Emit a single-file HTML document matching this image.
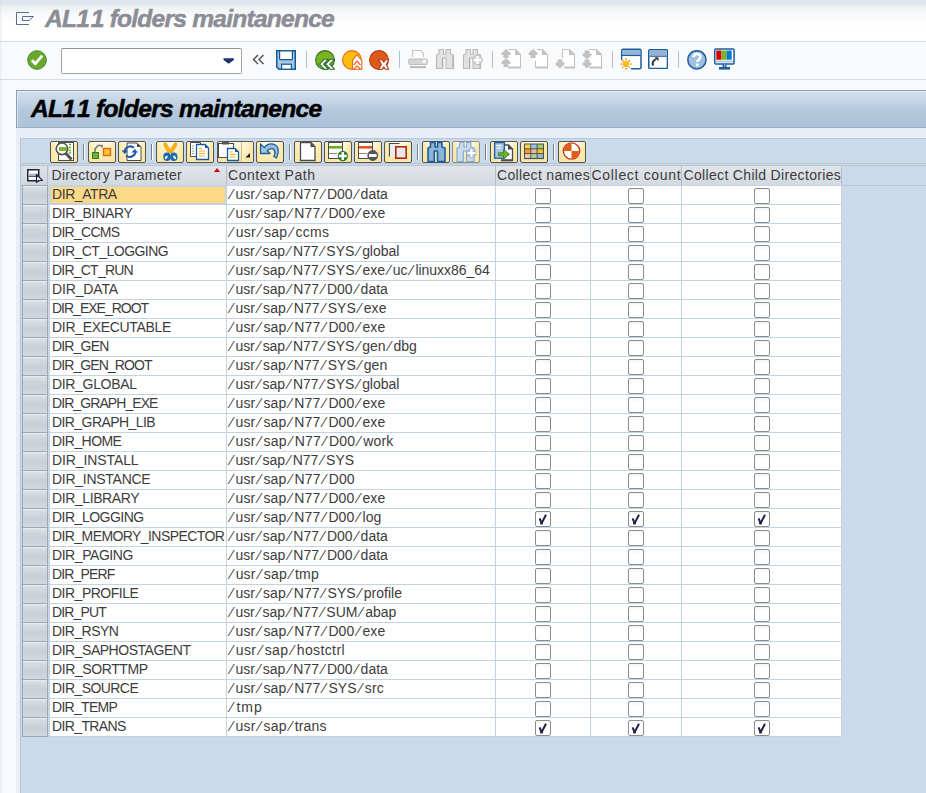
<!DOCTYPE html>
<html><head><meta charset="utf-8">
<style>
*{box-sizing:border-box;margin:0;padding:0}
html,body{width:926px;height:793px;overflow:hidden;background:#f6f7f9;font-family:"Liberation Sans",sans-serif}
.abs{position:absolute}
#titlebar{position:absolute;left:0;top:0;width:926px;height:41px;background:linear-gradient(#dde4ed 0px,#e1e7ef 3.5px,#eff2f6 8px,#f9fafc 15px,#fefefe 24px,#ffffff 41px)}
#title{position:absolute;left:45px;top:6px;-webkit-text-stroke:0.45px #8a8d95;font:bold italic 23px "Liberation Sans",sans-serif;color:#8a8d95;white-space:pre;letter-spacing:-0.74px;transform:scaleX(1.07);transform-origin:0 0}
#line1{position:absolute;left:0;top:41px;width:926px;height:1px;background:#d4dae2}
#toolbar{position:absolute;left:0;top:42px;width:926px;height:37px;background:#f9fafc}
#line2{position:absolute;left:0;top:79px;width:926px;height:1px;background:#d6dce4}
#leftstrip{position:absolute;left:0;top:80px;width:16px;height:713px;background:#f9fafb}
#leftedge{position:absolute;left:0;top:0;width:3px;height:793px;background:linear-gradient(90deg,rgba(205,212,222,.35),rgba(255,255,255,0))}
#topgap{position:absolute;left:16px;top:80px;width:910px;height:10px;background:#f6f8fa}
#hbox{position:absolute;left:16px;top:90px;width:910px;height:38px;border-top:1px solid #8c9db3;border-left:1px solid #8c9db3;border-bottom:1px solid #9cb0c6;box-shadow:inset 1px 1px 0 rgba(255,255,255,.45);background:linear-gradient(#d4e1ed 0px,#c4d5e5 10px,#b3c8dc 20px,#adc3d9 36px)}
#htitle{position:absolute;left:14px;top:5px;-webkit-text-stroke:0.45px #000;font:bold italic 23px "Liberation Sans",sans-serif;color:#000;white-space:pre;letter-spacing:-0.68px;transform:scaleX(1.07);transform-origin:0 0}
#below{position:absolute;left:16px;top:128px;width:910px;height:665px;background:#e8eef5}
#panel{position:absolute;left:20px;top:138px;width:906px;height:655px;background:#cadaea;border-top:1px solid #b7c5d4;border-left:1px solid #b7c5d4}
.btn{position:absolute;top:141px;height:22px;width:28px;border:1px solid #555;border-radius:2px;background:linear-gradient(90deg,rgba(248,228,150,.7),rgba(255,255,255,0) 25%,rgba(255,255,255,0) 75%,rgba(248,228,150,.7)),linear-gradient(#fffbe6,#fdf1c4 40%,#f9e8ab)}
.btn svg{position:absolute;left:-1px;top:-1px;overflow:visible}
.btn.dis{border-color:#8f8f8f}
.bsep{position:absolute;top:144px;height:16px;width:1px;background:#6f7f90;box-shadow:1px 0 0 #fff}
.tsep{position:absolute;top:51px;height:17px;width:1px;background:#a9c1dc}
#tl1{position:absolute;left:21px;top:163px;width:905px;height:1px;background:#bac6d2}
#tl2{position:absolute;left:21px;top:165px;width:905px;height:1px;background:#b9c5d1}
#tl3{position:absolute;left:21px;top:185px;width:905px;height:1px;background:#bcc7d2}
.hc{position:absolute;top:166px;height:19px;background:linear-gradient(#e1e5ea,#d3d9e0);border-right:1px solid #b3bfcb;white-space:pre}
.hc .t{z-index:3;position:absolute;left:0.5px;top:1px}
.t{font-size:14px;color:#3c3c3c;white-space:pre;line-height:17px}
#hsel{position:absolute;left:22px;top:166px;width:26px;height:19px;background:linear-gradient(#dfe3e8,#d0d6dd);border-right:1px solid #b3bfcb}
.sel{position:absolute;left:22px;width:26px;height:20px;border:1px solid #9ba8b6;background:linear-gradient(#edf0f3 0px,#d7dce2 2px,#c9cfd7 10px,#d4d9df 19px)}
#tablebg{position:absolute;left:48px;top:185px;width:794px;height:552px;background:#c5d2df;border-left:1px solid #c8d8e8}
.cell{position:absolute;height:18px;background:#fff}
.cell .t{z-index:3;position:absolute;left:2px;top:0px}
.c2 .t{left:0.5px}
.sl{font-style:normal;margin:0 2.6px 0 3px}
.c1{left:50px;width:176px}
.c2{left:227px;width:268px}
.c3{left:496px;width:94px}
.c4{left:591px;width:90px}
.c5{left:682px;width:159px}
.hl{background:#fcd987;border:1px solid #c5d2df}
.hl .t{left:1px;top:-1px}
.cb{position:absolute;width:16px;height:16px;border:1px solid #8c8c8c;border-radius:2px;background:linear-gradient(#f4f4f4,#fff 4px,#fff)}
.cb svg{position:absolute;left:-1px;top:-1px}
#sortarrow{position:absolute;left:214px;top:168px;width:0;height:0;border-left:3.5px solid transparent;border-right:3.5px solid transparent;border-bottom:4px solid #d0021b}
</style></head><body>
<div id="titlebar">
  <svg class="abs" style="left:16px;top:11px" width="19" height="15" viewBox="0 0 19 15"><path d="M13 1.5H0.5V13.5H13M13 5.5H6.5V9.5H13L17.5 5.5H13" fill="none" stroke="#5d6e8c" stroke-width="1"/></svg>
  <div id="title">AL1<span style="margin-left:1.5px">1</span> folders maintanence</div>
</div>
<div id="line1"></div>
<div id="toolbar">
  <!-- green check -->
  <svg class="abs" style="left:27px;top:8px" width="20" height="20" viewBox="0 0 20 20"><circle cx="10" cy="10" r="9.3" fill="#69a82a" stroke="#3f8a2a" stroke-width="1"/><path d="M4.8 10.2L8.3 13.6L15.2 5.6" fill="none" stroke="#fff" stroke-width="2.8"/></svg>
  <!-- command field -->
  <div class="abs" style="left:61px;top:6px;width:181px;height:26px;border:1px solid #a3a3a3;border-top-color:#8e8e8e;border-radius:2px;background:#fff"></div>
  <svg class="abs" style="left:223px;top:15.5px" width="12" height="7" viewBox="0 0 12 7"><path d="M0.5 0.3H10.8V2L5.65 5.8L0.5 2Z" fill="#1e3170"/></svg>
  <svg class="abs" style="left:252px;top:12px" width="14" height="11" viewBox="0 0 14 11"><path d="M6 1L1.5 5.5L6 10M11.5 1L7 5.5L11.5 10" fill="none" stroke="#555" stroke-width="1.5"/></svg>
  <!-- save -->
  <svg class="abs" style="left:276px;top:8px" width="20" height="20" viewBox="0 0 20 20"><path d="M0.75 0.75H19.25V19.25H3L0.75 17Z" fill="#a9c5e2" stroke="#0f5a96" stroke-width="1.5"/><rect x="3.6" y="0.8" width="12.8" height="8.8" rx="0.8" fill="#fff" stroke="#0f5a96" stroke-width="1.2"/><rect x="5.6" y="14.2" width="9.8" height="5" fill="#fff" stroke="#0f5a96" stroke-width="1.2"/></svg>
  <div class="tsep" style="left:306px;top:9px"></div>
  <!-- back -->
  <svg class="abs" style="left:315px;top:8px" width="21" height="21" viewBox="0 0 21 21"><circle cx="10" cy="10" r="9.4" fill="#7ab51d" stroke="#2d6e2d" stroke-width="1.1"/><path d="M4.5 14.2L9.3 9.3H13.3L8.5 14.2L13.3 19.2H9.3Z M10.5 14.2L15.3 9.3H19.5L14.7 14.2L19.5 19.2H15.3Z" fill="#fff" stroke="#2d6e2d" stroke-width="1.1" stroke-linejoin="round"/></svg>
  <!-- exit -->
  <svg class="abs" style="left:342px;top:8px" width="21" height="21" viewBox="0 0 21 21"><circle cx="10" cy="10" r="9.4" fill="#fbbd12" stroke="#e8681a" stroke-width="1.1"/><path d="M10.5 19.3V10.5L14.8 4.8L19.8 10.5V19.3Z" fill="#fff" stroke="#e8681a" stroke-width="1.1" stroke-linejoin="round"/><path d="M11.8 15L15 11.2L18.5 15M11.8 19.2L15 15.8L18.5 19.2" fill="none" stroke="#e8681a" stroke-width="1.2"/></svg>
  <!-- cancel -->
  <svg class="abs" style="left:369px;top:8px" width="21" height="21" viewBox="0 0 21 21"><circle cx="10" cy="10" r="9.4" fill="#dc5a1a" stroke="#b83a10" stroke-width="1.1"/><path d="M9.8 9.8H13.3L14.8 12.2L16.3 9.8H19.8L17.3 14.5L19.8 19.3H16.3L14.8 16.8L13.3 19.3H9.8L12.3 14.5Z" fill="#fff" stroke="#b83a10" stroke-width="1.1" stroke-linejoin="round"/></svg>
  <div class="tsep" style="left:399px;top:9px"></div>
  <!-- print -->
  <svg class="abs" style="left:408px;top:7px" width="20" height="20" viewBox="0 0 20 20"><path d="M4.5 8V1.5H12.5L15.5 4.5V8" fill="#fff" stroke="#c4c4c4" stroke-width="1.2"/><rect x="0.8" y="10" width="18.4" height="5.5" rx="1" fill="#d6d6d6" stroke="#bdbdbd"/><rect x="15" y="11" width="3" height="3" fill="#fff"/><rect x="2" y="17" width="16" height="2.2" fill="#bdbdbd"/></svg>
  <!-- find -->
  <svg class="abs" style="left:435px;top:7px" width="21" height="21" viewBox="0 0 21 21"><path d="M1.5 19.5V6L4 5V0.5H8.5V5H11V0.5H15.5V5L18.5 6V19.5H11V9H7.8V19.5Z" fill="#e2e2e2" stroke="#b9b9b9" stroke-width="1.1" stroke-linejoin="round"/><path d="M18 6.5V19M7.5 9.5V19" stroke="#a9a9a9" stroke-width="1"/></svg>
  <svg class="abs" style="left:462px;top:7px" width="22" height="21" viewBox="0 0 22 21"><path d="M1.5 19.5V6L4 5V0.5H8.5V5H11V0.5H15.5V5L18.5 6V19.5H11V9H7.8V19.5Z" fill="#e2e2e2" stroke="#b9b9b9" stroke-width="1.1" stroke-linejoin="round"/><path d="M18 6.5V19M7.5 9.5V19" stroke="#a9a9a9" stroke-width="1"/><circle cx="15.5" cy="11" r="4.8" fill="#d8d8d8" stroke="#b9b9b9"/><path d="M11.5 11H19.5M15.5 7V15" stroke="#fff" stroke-width="2.2"/></svg>
  <div class="tsep" style="left:492px;top:9px"></div>
  <!-- page icons -->
  <svg class="abs" style="left:501px;top:7px" width="21" height="21" viewBox="0 0 21 21"><path d="M7.5 0.5H14.5L19.5 5.5V18.5H7.5" fill="#fff" stroke="#c2c2c2" stroke-width="1.1"/><path d="M14 0V6H20Z" fill="#c2c2c2"/><rect x="7.5" y="17.5" width="12.5" height="2" fill="#c2c2c2"/><path d="M5 0L0.5 4V6H9.5V4Z" fill="#c2c2c2"/><rect x="2.5" y="5.5" width="5" height="3.5" fill="#c2c2c2"/><path d="M5 9L0.5 13V15H9.5V13Z" fill="#c2c2c2"/><rect x="2.5" y="14.5" width="5" height="3.5" fill="#c2c2c2"/></svg>
  <svg class="abs" style="left:528px;top:7px" width="21" height="21" viewBox="0 0 21 21"><path d="M7.5 12V18.5H19.5V5.5L14.5 0.5H9" fill="#fff" stroke="#c2c2c2" stroke-width="1.1"/><path d="M14 0V6H20Z" fill="#c2c2c2"/><rect x="7.5" y="17.5" width="12.5" height="2" fill="#c2c2c2"/><path d="M5 0L0.5 4V6H9.5V4Z" fill="#c2c2c2"/><rect x="2.5" y="5.5" width="5" height="3.5" fill="#c2c2c2"/></svg>
  <svg class="abs" style="left:555px;top:7px" width="21" height="21" viewBox="0 0 21 21"><path d="M7.5 9V0.5H14.5L19.5 5.5V18.5H10" fill="#fff" stroke="#c2c2c2" stroke-width="1.1"/><path d="M14 0V6H20Z" fill="#c2c2c2"/><rect x="9" y="17.5" width="11" height="2" fill="#c2c2c2"/><path d="M5 19.5L0.5 15.5V13.5H9.5V15.5Z" fill="#c2c2c2"/><rect x="2.5" y="10.5" width="5" height="3.5" fill="#c2c2c2"/></svg>
  <svg class="abs" style="left:582px;top:7px" width="21" height="21" viewBox="0 0 21 21"><path d="M7.5 0.5H14.5L19.5 5.5V18.5H7.5" fill="#fff" stroke="#c2c2c2" stroke-width="1.1"/><path d="M14 0V6H20Z" fill="#c2c2c2"/><rect x="7.5" y="17.5" width="12.5" height="2" fill="#c2c2c2"/><path d="M5 10.5L0.5 6.5V4.5H9.5V6.5Z" fill="#c2c2c2"/><rect x="2.5" y="1.5" width="5" height="3.5" fill="#c2c2c2"/><path d="M5 19.5L0.5 15.5V13.5H9.5V15.5Z" fill="#c2c2c2"/><rect x="2.5" y="10.5" width="5" height="3.5" fill="#c2c2c2"/></svg>
  <div class="tsep" style="left:612px;top:9px"></div>
  <!-- new session -->
  <svg class="abs" style="left:618px;top:6px" width="26" height="24" viewBox="0 0 26 24"><path d="M3.75 12V2.5Q3.75 1.25 5 1.25H21.75Q23 1.25 23 2.5V19.5Q23 20.75 21.75 20.75H13" fill="#fff" stroke="#1a5e9a" stroke-width="1.5"/><rect x="4.5" y="2" width="17.8" height="5" fill="#93b4d8"/><path d="M4 7.5H22.8" stroke="#1a5e9a" stroke-width="1.2"/><rect x="4.5" y="8.2" width="8" height="5" fill="#fff"/><circle cx="8" cy="16" r="3.2" fill="#f9b90f"/><path d="M8 10.5V21.5M2.5 16H13.5M4.2 12.2L11.8 19.8M11.8 12.2L4.2 19.8" stroke="#f08a12" stroke-width="1.6" stroke-dasharray="1.6 1.6"/><circle cx="8" cy="16" r="3" fill="#fbbf14"/></svg>
  <!-- shortcut -->
  <svg class="abs" style="left:648px;top:7px" width="20" height="20" viewBox="0 0 20 20"><rect x="0.75" y="0.75" width="18.7" height="18.7" rx="1.3" fill="#fff" stroke="#1a5e9a" stroke-width="1.5"/><rect x="1.5" y="1.5" width="17.2" height="5" fill="#93b4d8"/><path d="M1.5 7.2H18.7" stroke="#1a5e9a" stroke-width="1.2"/><path d="M5.2 16.5Q3.8 13.5 6 11.5L8 10" fill="none" stroke="#3a3a3a" stroke-width="2"/><path d="M6.5 8.3H10.5V12.3Z" fill="#3a3a3a"/></svg>
  <div class="tsep" style="left:678px;top:9px"></div>
  <!-- help -->
  <svg class="abs" style="left:687px;top:8px" width="20" height="20" viewBox="0 0 20 20"><circle cx="9.9" cy="9.8" r="9.1" fill="#9dbfe0" stroke="#1a5e9a" stroke-width="1.5"/><path d="M6.6 7.2Q6.6 4 10 4Q13.4 4 13.4 7Q13.4 8.8 11.4 10Q10.3 10.7 10.3 12" fill="none" stroke="#fff" stroke-width="2.6"/><rect x="8.9" y="13.5" width="2.8" height="2.8" fill="#fff"/></svg>
  <!-- monitor -->
  <svg class="abs" style="left:714px;top:6px" width="21" height="22" viewBox="0 0 21 22"><rect x="0.75" y="0.9" width="19.3" height="15" rx="1" fill="#fff" stroke="#1a5e9a" stroke-width="1.5"/><rect x="2.3" y="2.5" width="5.2" height="9.2" fill="#d40000"/><rect x="7.5" y="2.5" width="5" height="9.2" fill="#7ab51d"/><rect x="12.5" y="2.5" width="5.2" height="9.2" fill="#0a7ac8"/><rect x="2" y="12.5" width="17" height="2" fill="#b5cbe2"/><rect x="8.5" y="16" width="4" height="3" fill="#1a5e9a"/><rect x="10" y="16.2" width="1.2" height="2.6" fill="#a9c4e0"/><rect x="5" y="19" width="11" height="2.6" fill="#1a5e9a"/></svg>
</div>
<div id="line2"></div>
<div id="leftstrip"></div>
<div id="topgap"></div>
<div id="hbox"><div id="htitle">AL1<span style="margin-left:1.5px">1</span> folders maintanence</div></div>
<div id="below"></div>
<div id="panel"></div>
<!-- table toolbar -->
<div class="btn" style="left:50px;width:28px"><svg width="28" height="22" viewBox="0 0 28 22"><rect x="8.5" y="1.5" width="15" height="18" fill="#fff" stroke="#4a4a4a"/>
<path d="M19 3.5h2M19 6.5h2M19 9.5h2M19 12h2" stroke="#6aad1e" stroke-width="1.6"/>
<circle cx="12" cy="7.8" r="5.8" fill="#fff" stroke="#555" stroke-width="1.6"/>
<rect x="9" y="6" width="8" height="4" fill="#7cb82e"/>
<path d="M15.5 12 L21.5 18.5" stroke="#555" stroke-width="3.2"/>
<path d="M8.5 19.5h8" stroke="#4a4a4a"/></svg></div>
<div class="btn" style="left:88px;width:28px"><svg width="28" height="22" viewBox="0 0 28 22"><path d="M7 11V8L10 4.5H14V6.5" fill="none" stroke="#777" stroke-width="1.6"/>
<rect x="4.5" y="11.5" width="6" height="6" fill="#6eb02a" stroke="#2f7a22"/>
<rect x="15.5" y="7.5" width="7" height="7" fill="#f9c42e" stroke="#e06a1a" stroke-width="1.4"/></svg></div>
<div class="btn" style="left:118px;width:28px"><svg width="28" height="22" viewBox="0 0 28 22"><path d="M9 2H19L23 6V19.5H9Z" fill="#fff" stroke="#4a4a4a"/><path d="M19 2V6H23Z" fill="#4a4a4a"/>
<path d="M6.5 10.5A5.8 5.8 0 0 1 16 6.8" fill="none" stroke="#1f5aa8" stroke-width="2"/>
<path d="M17.5 10.8A5.8 5.8 0 0 1 8 14.5" fill="none" stroke="#1f5aa8" stroke-width="2"/>
<path d="M3.5 9.5H10L6.8 13Z M13.5 11.5H20L16.8 8Z" fill="#1f5aa8"/></svg></div>
<div class="btn" style="left:156px;width:28px"><svg width="28" height="22" viewBox="0 0 28 22"><path d="M8 2H10L15 10.5L13.8 11.4H12.2L8 5Z M20.5 2H18.5L13.5 10.5L14.7 11.4H16.3L20.5 5Z" fill="#f8b615" stroke="#f08a0a" stroke-width="0.7"/>
<ellipse cx="11" cy="15.8" rx="3.7" ry="4.3" fill="#1a6aae"/><ellipse cx="10.2" cy="16.4" rx="1.1" ry="1.9" fill="#fff" transform="rotate(35 10.2 16.4)"/>
<ellipse cx="17.8" cy="15.8" rx="3.7" ry="4.3" fill="#1a6aae"/><ellipse cx="18.6" cy="16.4" rx="1.1" ry="1.9" fill="#fff" transform="rotate(-35 18.6 16.4)"/></svg></div>
<div class="btn" style="left:186px;width:28px"><svg width="28" height="22" viewBox="0 0 28 22"><path d="M4.5 1.5H14.5V15.5H4.5Z" fill="#fff" stroke="#4a4a4a"/>
<path d="M6 5h2M6 7.5h2M6 10h2M6 12.5h2" stroke="#999"/>
<path d="M10.5 3.5H19L22.5 7V18.5H10.5Z" fill="#fff" stroke="#1a5a99" stroke-width="1.3"/><path d="M19 3.5V7H22.5Z" fill="#1a5a99"/>
<path d="M13 7.5h3M13 10h6M13 12.5h6M13 15h6" stroke="#f0b020" stroke-width="1.2"/></svg></div>
<div class="btn" style="left:217px;width:37px"><svg width="37" height="22" viewBox="0 0 37 22"><rect x="1.5" y="2.5" width="15" height="14" fill="#fff" stroke="#4a4a4a"/>
<rect x="5" y="0.5" width="7" height="3" fill="#555"/>
<path d="M10.5 7.5H18L21.5 11V19.5H10.5Z" fill="#fff" stroke="#1a5a99" stroke-width="1.3"/><path d="M18 7.5V11H21.5Z" fill="#1a5a99"/>
<path d="M12.5 11h3M12.5 13.5h6M12.5 16h6" stroke="#f0b020" stroke-width="1.2"/>
<path d="M24.5 1V21" stroke="#c9bb86"/><path d="M25.5 1V21" stroke="#fff6d6"/>
<path d="M33 12V16.5H28.5Z" fill="#1a1a2a"/></svg></div>
<div class="btn" style="left:256px;width:28px"><svg width="28" height="22" viewBox="0 0 28 22"><path d="M4.5 3V12.5H14L11.3 9.8Q14 6.8 17 7.8Q19.5 9.5 18.8 13.2L17.8 15.5L20.5 17Q23 12 22 7.2Q20 2.8 15 2.8Q11 2.8 8.3 6.6Z" fill="#9ec0e0" stroke="#1a5e9a" stroke-width="1.3" stroke-linejoin="round"/></svg></div>
<div class="btn" style="left:294px;width:28px"><svg width="28" height="22" viewBox="0 0 28 22"><path d="M6.5 1.5H17L21 5.5V19.5H6.5Z" fill="#fff" stroke="#4a4a4a" stroke-width="1.3"/><path d="M16.5 1.5V6H21Z" fill="#4a4a4a"/></svg></div>
<div class="btn" style="left:324px;width:28px"><svg width="28" height="22" viewBox="0 0 28 22"><rect x="4.5" y="1.5" width="14" height="16" fill="#fff" stroke="#4a4a4a"/>
<rect x="5" y="5" width="13" height="2.6" fill="#6aad1e"/><path d="M5 12.5H13" stroke="#888"/>
<circle cx="18.8" cy="15" r="5.2" fill="#2f7f32"/>
<path d="M14.8 15H22.8M18.8 11V19" stroke="#fff" stroke-width="2.4"/></svg></div>
<div class="btn" style="left:354px;width:28px"><svg width="28" height="22" viewBox="0 0 28 22"><rect x="4.5" y="1.5" width="14" height="16" fill="#fff" stroke="#4a4a4a"/>
<rect x="5" y="5" width="13" height="2.6" fill="#e35a12"/><path d="M5 12.5H13" stroke="#888"/>
<circle cx="18.8" cy="14.5" r="5" fill="#555" stroke="#555"/>
<rect x="15" y="13" width="7.6" height="3" fill="#fff"/></svg></div>
<div class="btn" style="left:384px;width:28px"><svg width="28" height="22" viewBox="0 0 28 22"><path d="M5.5 15.5V2.5H15.5" fill="none" stroke="#4a4a4a" stroke-width="1.2"/><rect x="6" y="3" width="6" height="12" fill="#eee"/>
<rect x="11.8" y="5.8" width="10.4" height="11.4" fill="#e8e8e8" stroke="#b2260f" stroke-width="1.6"/></svg></div>
<div class="btn" style="left:422px;width:28px"><svg width="28" height="22" viewBox="0 0 28 22"><g transform="translate(4.5 1)"><path d="M1.5 19.5V6L4 5V0.5H8.5V5H11V0.5H15.5V5L18.5 6V19.5H11V9H7.8V19.5Z" fill="#8db4d8" stroke="#1a5e9a" stroke-width="1.6" stroke-linejoin="round"/></g></svg></div>
<div class="btn dis" style="left:452px;width:28px"><svg width="28" height="22" viewBox="0 0 28 22"><g transform="translate(3.5 1)"><path d="M1.5 19.5V6L4 5V0.5H8.5V5H11V0.5H15.5V5L18.5 6V19.5H11V9H7.8V19.5Z" fill="#c9dbec" stroke="#86acd0" stroke-width="1.2" stroke-linejoin="round"/></g>
<circle cx="19.5" cy="12" r="5" fill="#a9b8d6"/><path d="M15.5 12H23.5M19.5 8V16" stroke="#fff" stroke-width="2.2"/></svg></div>
<div class="btn" style="left:490px;width:28px"><svg width="28" height="22" viewBox="0 0 28 22"><path d="M12 4H18.5L22.5 8V19.5H11.5" fill="#fff" stroke="#4a4a4a" stroke-width="1.3"/><path d="M11 19.2H22.8" stroke="#4a4a4a" stroke-width="1.8"/><path d="M18 3.5V8.5H23Z" fill="#4a4a4a"/>
<rect x="4.6" y="1.6" width="9.8" height="15.6" fill="#a9c6e3" stroke="#1a5e9a" stroke-width="1.3"/>
<path d="M6.5 4.5h5M6.5 7h5" stroke="#fff" stroke-width="1.2"/>
<path d="M8.5 11.8H13.5V8.5L19.5 13.2L13.5 18V14.8H8.5Z" fill="#72b324" stroke="#2f7f32" stroke-width="0.9" stroke-linejoin="round"/></svg></div>
<div class="btn" style="left:520px;width:28px"><svg width="28" height="22" viewBox="0 0 28 22"><rect x="4" y="2.5" width="20" height="15.6" fill="#4f4f4f"/><rect x="5.0" y="3.5" width="5.3" height="3.8" fill="#fbd35a"/><rect x="11.3" y="3.5" width="5.3" height="3.8" fill="#9cc3e8"/><rect x="17.6" y="3.5" width="5.3" height="3.8" fill="#9fd06a"/><rect x="5.0" y="8.3" width="5.3" height="3.8" fill="#f5a11f"/><rect x="11.3" y="8.3" width="5.3" height="3.8" fill="#e5b8a8"/><rect x="17.6" y="8.3" width="5.3" height="3.8" fill="#fbc51b"/><rect x="5.0" y="13.1" width="5.3" height="3.8" fill="#f7c7cb"/><rect x="11.3" y="13.1" width="5.3" height="3.8" fill="#a8d79a"/><rect x="17.6" y="13.1" width="5.3" height="3.8" fill="#92bde4"/></svg></div>
<div class="btn" style="left:558px;width:28px"><svg width="28" height="22" viewBox="0 0 28 22"><circle cx="13.5" cy="10" r="8.2" fill="#fff" stroke="#c8321a" stroke-width="1.3"/>
<path d="M13.5 10V2.5A7.5 7.5 0 0 0 6 10Z M13.5 10V17.5A7.5 7.5 0 0 0 21 10Z" fill="#e05a14"/></svg></div>
<div class="bsep" style="left:83px"></div>
<div class="bsep" style="left:151px"></div>
<div class="bsep" style="left:289px"></div>
<div class="bsep" style="left:417px"></div>
<div class="bsep" style="left:485px"></div>
<div class="bsep" style="left:553px"></div>
<div id="tl1"></div><div id="tl2"></div>
<div id="hsel"><svg class="abs" style="left:4px;top:2px" width="18" height="15" viewBox="0 0 18 15"><rect x="1.75" y="1.75" width="11" height="11" fill="#fff" stroke="#22223c" stroke-width="1.5"/><rect x="2.5" y="5.5" width="9.5" height="2" fill="#b9b9b9"/><path d="M2.5 8.25H12.5" stroke="#22223c" stroke-width="1"/><path d="M10.5 6.5V14.5L12.5 12.5H16.5Z" fill="#fff" stroke="#22223c" stroke-width="1.2" stroke-linejoin="round"/></svg></div>
<div class="hc" style="left:49px;width:178px"><span class="t" style="left:2.5px;letter-spacing:0.27px;">Directory Parameter</span></div>
<div class="hc" style="left:227px;width:269px"><span class="t" style="left:1px;letter-spacing:0.55px;">Context Path</span></div>
<div class="hc" style="left:496px;width:95px"><span class="t" style="left:1px;letter-spacing:0.33px;">Collect names</span></div>
<div class="hc" style="left:591px;width:91px"><span class="t" style="left:0.6px;letter-spacing:0.67px;">Collect count</span></div>
<div class="hc" style="left:682px;width:160px"><span class="t" style="left:1.5px;letter-spacing:0.33px;">Collect Child Directories</span></div>
<div id="sortarrow"></div>
<div id="tl3"></div>
<div id="tablebg"></div>
<div class="sel" style="top:185px"></div>
<div class="cell c1 hl" style="top:186px"><span class="t" style="letter-spacing:-0.43px;">DIR_ATRA</span></div>
<div class="cell c2" style="top:186px"><span class="t" style="letter-spacing:0.00px;"><i class="sl">&#x2044;</i>usr<i class="sl">&#x2044;</i>sap<i class="sl">&#x2044;</i>N77<i class="sl">&#x2044;</i>D00<i class="sl">&#x2044;</i>data</span></div>
<div class="cell c3" style="top:186px"></div>
<div class="cell c4" style="top:186px"></div>
<div class="cell c5" style="top:186px"></div>
<div class="cb" style="left:535px;top:188px"></div>
<div class="cb" style="left:628px;top:188px"></div>
<div class="cb" style="left:754px;top:188px"></div>
<div class="sel" style="top:204px"></div>
<div class="cell c1" style="top:205px"><span class="t" style="letter-spacing:-0.33px;">DIR_BINARY</span></div>
<div class="cell c2" style="top:205px"><span class="t" style="letter-spacing:0.11px;"><i class="sl">&#x2044;</i>usr<i class="sl">&#x2044;</i>sap<i class="sl">&#x2044;</i>N77<i class="sl">&#x2044;</i>D00<i class="sl">&#x2044;</i>exe</span></div>
<div class="cell c3" style="top:205px"></div>
<div class="cell c4" style="top:205px"></div>
<div class="cell c5" style="top:205px"></div>
<div class="cb" style="left:535px;top:207px"></div>
<div class="cb" style="left:628px;top:207px"></div>
<div class="cb" style="left:754px;top:207px"></div>
<div class="sel" style="top:223px"></div>
<div class="cell c1" style="top:224px"><span class="t" style="letter-spacing:-0.71px;">DIR_CCMS</span></div>
<div class="cell c2" style="top:224px"><span class="t" style="letter-spacing:0.25px;"><i class="sl">&#x2044;</i>usr<i class="sl">&#x2044;</i>sap<i class="sl">&#x2044;</i>ccms</span></div>
<div class="cell c3" style="top:224px"></div>
<div class="cell c4" style="top:224px"></div>
<div class="cell c5" style="top:224px"></div>
<div class="cb" style="left:535px;top:226px"></div>
<div class="cb" style="left:628px;top:226px"></div>
<div class="cb" style="left:754px;top:226px"></div>
<div class="sel" style="top:242px"></div>
<div class="cell c1" style="top:243px"><span class="t" style="letter-spacing:-0.54px;">DIR_CT_LOGGING</span></div>
<div class="cell c2" style="top:243px"><span class="t" style="letter-spacing:-0.05px;"><i class="sl">&#x2044;</i>usr<i class="sl">&#x2044;</i>sap<i class="sl">&#x2044;</i>N77<i class="sl">&#x2044;</i>SYS<i class="sl">&#x2044;</i>global</span></div>
<div class="cell c3" style="top:243px"></div>
<div class="cell c4" style="top:243px"></div>
<div class="cell c5" style="top:243px"></div>
<div class="cb" style="left:535px;top:245px"></div>
<div class="cb" style="left:628px;top:245px"></div>
<div class="cb" style="left:754px;top:245px"></div>
<div class="sel" style="top:261px"></div>
<div class="cell c1" style="top:262px"><span class="t" style="letter-spacing:-0.78px;">DIR_CT_RUN</span></div>
<div class="cell c2" style="top:262px"><span class="t" style="letter-spacing:-0.03px;"><i class="sl">&#x2044;</i>usr<i class="sl">&#x2044;</i>sap<i class="sl">&#x2044;</i>N77<i class="sl">&#x2044;</i>SYS<i class="sl">&#x2044;</i>exe<i class="sl">&#x2044;</i>uc<i class="sl">&#x2044;</i>linuxx86_64</span></div>
<div class="cell c3" style="top:262px"></div>
<div class="cell c4" style="top:262px"></div>
<div class="cell c5" style="top:262px"></div>
<div class="cb" style="left:535px;top:264px"></div>
<div class="cb" style="left:628px;top:264px"></div>
<div class="cb" style="left:754px;top:264px"></div>
<div class="sel" style="top:280px"></div>
<div class="cell c1" style="top:281px"><span class="t" style="letter-spacing:-0.14px;">DIR_DATA</span></div>
<div class="cell c2" style="top:281px"><span class="t" style="letter-spacing:0.00px;"><i class="sl">&#x2044;</i>usr<i class="sl">&#x2044;</i>sap<i class="sl">&#x2044;</i>N77<i class="sl">&#x2044;</i>D00<i class="sl">&#x2044;</i>data</span></div>
<div class="cell c3" style="top:281px"></div>
<div class="cell c4" style="top:281px"></div>
<div class="cell c5" style="top:281px"></div>
<div class="cb" style="left:535px;top:283px"></div>
<div class="cb" style="left:628px;top:283px"></div>
<div class="cb" style="left:754px;top:283px"></div>
<div class="sel" style="top:299px"></div>
<div class="cell c1" style="top:300px"><span class="t" style="letter-spacing:-1.00px;">DIR_EXE_ROOT</span></div>
<div class="cell c2" style="top:300px"><span class="t" style="letter-spacing:0.05px;"><i class="sl">&#x2044;</i>usr<i class="sl">&#x2044;</i>sap<i class="sl">&#x2044;</i>N77<i class="sl">&#x2044;</i>SYS<i class="sl">&#x2044;</i>exe</span></div>
<div class="cell c3" style="top:300px"></div>
<div class="cell c4" style="top:300px"></div>
<div class="cell c5" style="top:300px"></div>
<div class="cb" style="left:535px;top:302px"></div>
<div class="cb" style="left:628px;top:302px"></div>
<div class="cb" style="left:754px;top:302px"></div>
<div class="sel" style="top:318px"></div>
<div class="cell c1" style="top:319px"><span class="t" style="letter-spacing:-0.31px;">DIR_EXECUTABLE</span></div>
<div class="cell c2" style="top:319px"><span class="t" style="letter-spacing:0.11px;"><i class="sl">&#x2044;</i>usr<i class="sl">&#x2044;</i>sap<i class="sl">&#x2044;</i>N77<i class="sl">&#x2044;</i>D00<i class="sl">&#x2044;</i>exe</span></div>
<div class="cell c3" style="top:319px"></div>
<div class="cell c4" style="top:319px"></div>
<div class="cell c5" style="top:319px"></div>
<div class="cb" style="left:535px;top:321px"></div>
<div class="cb" style="left:628px;top:321px"></div>
<div class="cb" style="left:754px;top:321px"></div>
<div class="sel" style="top:337px"></div>
<div class="cell c1" style="top:338px"><span class="t" style="letter-spacing:-0.83px;">DIR_GEN</span></div>
<div class="cell c2" style="top:338px"><span class="t" style="letter-spacing:-0.04px;"><i class="sl">&#x2044;</i>usr<i class="sl">&#x2044;</i>sap<i class="sl">&#x2044;</i>N77<i class="sl">&#x2044;</i>SYS<i class="sl">&#x2044;</i>gen<i class="sl">&#x2044;</i>dbg</span></div>
<div class="cell c3" style="top:338px"></div>
<div class="cell c4" style="top:338px"></div>
<div class="cell c5" style="top:338px"></div>
<div class="cb" style="left:535px;top:340px"></div>
<div class="cb" style="left:628px;top:340px"></div>
<div class="cb" style="left:754px;top:340px"></div>
<div class="sel" style="top:356px"></div>
<div class="cell c1" style="top:357px"><span class="t" style="letter-spacing:-0.91px;">DIR_GEN_ROOT</span></div>
<div class="cell c2" style="top:357px"><span class="t" style="letter-spacing:0.05px;"><i class="sl">&#x2044;</i>usr<i class="sl">&#x2044;</i>sap<i class="sl">&#x2044;</i>N77<i class="sl">&#x2044;</i>SYS<i class="sl">&#x2044;</i>gen</span></div>
<div class="cell c3" style="top:357px"></div>
<div class="cell c4" style="top:357px"></div>
<div class="cell c5" style="top:357px"></div>
<div class="cb" style="left:535px;top:359px"></div>
<div class="cb" style="left:628px;top:359px"></div>
<div class="cb" style="left:754px;top:359px"></div>
<div class="sel" style="top:375px"></div>
<div class="cell c1" style="top:376px"><span class="t" style="letter-spacing:-0.33px;">DIR_GLOBAL</span></div>
<div class="cell c2" style="top:376px"><span class="t" style="letter-spacing:-0.05px;"><i class="sl">&#x2044;</i>usr<i class="sl">&#x2044;</i>sap<i class="sl">&#x2044;</i>N77<i class="sl">&#x2044;</i>SYS<i class="sl">&#x2044;</i>global</span></div>
<div class="cell c3" style="top:376px"></div>
<div class="cell c4" style="top:376px"></div>
<div class="cell c5" style="top:376px"></div>
<div class="cb" style="left:535px;top:378px"></div>
<div class="cb" style="left:628px;top:378px"></div>
<div class="cb" style="left:754px;top:378px"></div>
<div class="sel" style="top:394px"></div>
<div class="cell c1" style="top:395px"><span class="t" style="letter-spacing:-0.92px;">DIR_GRAPH_EXE</span></div>
<div class="cell c2" style="top:395px"><span class="t" style="letter-spacing:0.11px;"><i class="sl">&#x2044;</i>usr<i class="sl">&#x2044;</i>sap<i class="sl">&#x2044;</i>N77<i class="sl">&#x2044;</i>D00<i class="sl">&#x2044;</i>exe</span></div>
<div class="cell c3" style="top:395px"></div>
<div class="cell c4" style="top:395px"></div>
<div class="cell c5" style="top:395px"></div>
<div class="cb" style="left:535px;top:397px"></div>
<div class="cb" style="left:628px;top:397px"></div>
<div class="cb" style="left:754px;top:397px"></div>
<div class="sel" style="top:413px"></div>
<div class="cell c1" style="top:414px"><span class="t" style="letter-spacing:-0.58px;">DIR_GRAPH_LIB</span></div>
<div class="cell c2" style="top:414px"><span class="t" style="letter-spacing:0.11px;"><i class="sl">&#x2044;</i>usr<i class="sl">&#x2044;</i>sap<i class="sl">&#x2044;</i>N77<i class="sl">&#x2044;</i>D00<i class="sl">&#x2044;</i>exe</span></div>
<div class="cell c3" style="top:414px"></div>
<div class="cell c4" style="top:414px"></div>
<div class="cell c5" style="top:414px"></div>
<div class="cb" style="left:535px;top:416px"></div>
<div class="cb" style="left:628px;top:416px"></div>
<div class="cb" style="left:754px;top:416px"></div>
<div class="sel" style="top:432px"></div>
<div class="cell c1" style="top:433px"><span class="t" style="letter-spacing:-0.57px;">DIR_HOME</span></div>
<div class="cell c2" style="top:433px"><span class="t" style="letter-spacing:0.15px;"><i class="sl">&#x2044;</i>usr<i class="sl">&#x2044;</i>sap<i class="sl">&#x2044;</i>N77<i class="sl">&#x2044;</i>D00<i class="sl">&#x2044;</i>work</span></div>
<div class="cell c3" style="top:433px"></div>
<div class="cell c4" style="top:433px"></div>
<div class="cell c5" style="top:433px"></div>
<div class="cb" style="left:535px;top:435px"></div>
<div class="cb" style="left:628px;top:435px"></div>
<div class="cb" style="left:754px;top:435px"></div>
<div class="sel" style="top:451px"></div>
<div class="cell c1" style="top:452px"><span class="t" style="letter-spacing:-0.10px;">DIR_INSTALL</span></div>
<div class="cell c2" style="top:452px"><span class="t" style="letter-spacing:-0.07px;"><i class="sl">&#x2044;</i>usr<i class="sl">&#x2044;</i>sap<i class="sl">&#x2044;</i>N77<i class="sl">&#x2044;</i>SYS</span></div>
<div class="cell c3" style="top:452px"></div>
<div class="cell c4" style="top:452px"></div>
<div class="cell c5" style="top:452px"></div>
<div class="cb" style="left:535px;top:454px"></div>
<div class="cb" style="left:628px;top:454px"></div>
<div class="cb" style="left:754px;top:454px"></div>
<div class="sel" style="top:470px"></div>
<div class="cell c1" style="top:471px"><span class="t" style="letter-spacing:-0.27px;">DIR_INSTANCE</span></div>
<div class="cell c2" style="top:471px"><span class="t" style="letter-spacing:0.13px;"><i class="sl">&#x2044;</i>usr<i class="sl">&#x2044;</i>sap<i class="sl">&#x2044;</i>N77<i class="sl">&#x2044;</i>D00</span></div>
<div class="cell c3" style="top:471px"></div>
<div class="cell c4" style="top:471px"></div>
<div class="cell c5" style="top:471px"></div>
<div class="cb" style="left:535px;top:473px"></div>
<div class="cb" style="left:628px;top:473px"></div>
<div class="cb" style="left:754px;top:473px"></div>
<div class="sel" style="top:489px"></div>
<div class="cell c1" style="top:490px"><span class="t" style="letter-spacing:-0.40px;">DIR_LIBRARY</span></div>
<div class="cell c2" style="top:490px"><span class="t" style="letter-spacing:0.11px;"><i class="sl">&#x2044;</i>usr<i class="sl">&#x2044;</i>sap<i class="sl">&#x2044;</i>N77<i class="sl">&#x2044;</i>D00<i class="sl">&#x2044;</i>exe</span></div>
<div class="cell c3" style="top:490px"></div>
<div class="cell c4" style="top:490px"></div>
<div class="cell c5" style="top:490px"></div>
<div class="cb" style="left:535px;top:492px"></div>
<div class="cb" style="left:628px;top:492px"></div>
<div class="cb" style="left:754px;top:492px"></div>
<div class="sel" style="top:508px"></div>
<div class="cell c1" style="top:509px"><span class="t" style="letter-spacing:-0.50px;">DIR_LOGGING</span></div>
<div class="cell c2" style="top:509px"><span class="t" style="letter-spacing:0.11px;"><i class="sl">&#x2044;</i>usr<i class="sl">&#x2044;</i>sap<i class="sl">&#x2044;</i>N77<i class="sl">&#x2044;</i>D00<i class="sl">&#x2044;</i>log</span></div>
<div class="cell c3" style="top:509px"></div>
<div class="cell c4" style="top:509px"></div>
<div class="cell c5" style="top:509px"></div>
<div class="cb" style="left:535px;top:511px"><svg width="16" height="16" viewBox="0 0 16 16"><path d="M4.6 7.3 L6.6 12.3 L11 3.8" fill="none" stroke="#1f2447" stroke-width="2" stroke-linejoin="round"/><rect x="5.2" y="11" width="2.6" height="2.4" fill="#1f2447"/></svg></div>
<div class="cb" style="left:628px;top:511px"><svg width="16" height="16" viewBox="0 0 16 16"><path d="M4.6 7.3 L6.6 12.3 L11 3.8" fill="none" stroke="#1f2447" stroke-width="2" stroke-linejoin="round"/><rect x="5.2" y="11" width="2.6" height="2.4" fill="#1f2447"/></svg></div>
<div class="cb" style="left:754px;top:511px"><svg width="16" height="16" viewBox="0 0 16 16"><path d="M4.6 7.3 L6.6 12.3 L11 3.8" fill="none" stroke="#1f2447" stroke-width="2" stroke-linejoin="round"/><rect x="5.2" y="11" width="2.6" height="2.4" fill="#1f2447"/></svg></div>
<div class="sel" style="top:527px"></div>
<div class="cell c1" style="top:528px"><span class="t" style="letter-spacing:-0.58px;">DIR_MEMORY_INSPECTOR</span></div>
<div class="cell c2" style="top:528px"><span class="t" style="letter-spacing:0.00px;"><i class="sl">&#x2044;</i>usr<i class="sl">&#x2044;</i>sap<i class="sl">&#x2044;</i>N77<i class="sl">&#x2044;</i>D00<i class="sl">&#x2044;</i>data</span></div>
<div class="cell c3" style="top:528px"></div>
<div class="cell c4" style="top:528px"></div>
<div class="cell c5" style="top:528px"></div>
<div class="cb" style="left:535px;top:530px"></div>
<div class="cb" style="left:628px;top:530px"></div>
<div class="cb" style="left:754px;top:530px"></div>
<div class="sel" style="top:546px"></div>
<div class="cell c1" style="top:547px"><span class="t" style="letter-spacing:-0.44px;">DIR_PAGING</span></div>
<div class="cell c2" style="top:547px"><span class="t" style="letter-spacing:0.00px;"><i class="sl">&#x2044;</i>usr<i class="sl">&#x2044;</i>sap<i class="sl">&#x2044;</i>N77<i class="sl">&#x2044;</i>D00<i class="sl">&#x2044;</i>data</span></div>
<div class="cell c3" style="top:547px"></div>
<div class="cell c4" style="top:547px"></div>
<div class="cell c5" style="top:547px"></div>
<div class="cb" style="left:535px;top:549px"></div>
<div class="cb" style="left:628px;top:549px"></div>
<div class="cb" style="left:754px;top:549px"></div>
<div class="sel" style="top:565px"></div>
<div class="cell c1" style="top:566px"><span class="t" style="letter-spacing:-0.86px;">DIR_PERF</span></div>
<div class="cell c2" style="top:566px"><span class="t" style="letter-spacing:0.18px;"><i class="sl">&#x2044;</i>usr<i class="sl">&#x2044;</i>sap<i class="sl">&#x2044;</i>tmp</span></div>
<div class="cell c3" style="top:566px"></div>
<div class="cell c4" style="top:566px"></div>
<div class="cell c5" style="top:566px"></div>
<div class="cb" style="left:535px;top:568px"></div>
<div class="cb" style="left:628px;top:568px"></div>
<div class="cb" style="left:754px;top:568px"></div>
<div class="sel" style="top:584px"></div>
<div class="cell c1" style="top:585px"><span class="t" style="letter-spacing:-0.50px;">DIR_PROFILE</span></div>
<div class="cell c2" style="top:585px"><span class="t" style="letter-spacing:0.04px;"><i class="sl">&#x2044;</i>usr<i class="sl">&#x2044;</i>sap<i class="sl">&#x2044;</i>N77<i class="sl">&#x2044;</i>SYS<i class="sl">&#x2044;</i>profile</span></div>
<div class="cell c3" style="top:585px"></div>
<div class="cell c4" style="top:585px"></div>
<div class="cell c5" style="top:585px"></div>
<div class="cb" style="left:535px;top:587px"></div>
<div class="cb" style="left:628px;top:587px"></div>
<div class="cb" style="left:754px;top:587px"></div>
<div class="sel" style="top:603px"></div>
<div class="cell c1" style="top:604px"><span class="t" style="letter-spacing:-0.83px;">DIR_PUT</span></div>
<div class="cell c2" style="top:604px"><span class="t" style="letter-spacing:-0.05px;"><i class="sl">&#x2044;</i>usr<i class="sl">&#x2044;</i>sap<i class="sl">&#x2044;</i>N77<i class="sl">&#x2044;</i>SUM<i class="sl">&#x2044;</i>abap</span></div>
<div class="cell c3" style="top:604px"></div>
<div class="cell c4" style="top:604px"></div>
<div class="cell c5" style="top:604px"></div>
<div class="cb" style="left:535px;top:606px"></div>
<div class="cb" style="left:628px;top:606px"></div>
<div class="cb" style="left:754px;top:606px"></div>
<div class="sel" style="top:622px"></div>
<div class="cell c1" style="top:623px"><span class="t" style="letter-spacing:-0.57px;">DIR_RSYN</span></div>
<div class="cell c2" style="top:623px"><span class="t" style="letter-spacing:0.11px;"><i class="sl">&#x2044;</i>usr<i class="sl">&#x2044;</i>sap<i class="sl">&#x2044;</i>N77<i class="sl">&#x2044;</i>D00<i class="sl">&#x2044;</i>exe</span></div>
<div class="cell c3" style="top:623px"></div>
<div class="cell c4" style="top:623px"></div>
<div class="cell c5" style="top:623px"></div>
<div class="cb" style="left:535px;top:625px"></div>
<div class="cb" style="left:628px;top:625px"></div>
<div class="cb" style="left:754px;top:625px"></div>
<div class="sel" style="top:641px"></div>
<div class="cell c1" style="top:642px"><span class="t" style="letter-spacing:-0.47px;">DIR_SAPHOSTAGENT</span></div>
<div class="cell c2" style="top:642px"><span class="t" style="letter-spacing:0.38px;"><i class="sl">&#x2044;</i>usr<i class="sl">&#x2044;</i>sap<i class="sl">&#x2044;</i>hostctrl</span></div>
<div class="cell c3" style="top:642px"></div>
<div class="cell c4" style="top:642px"></div>
<div class="cell c5" style="top:642px"></div>
<div class="cb" style="left:535px;top:644px"></div>
<div class="cb" style="left:628px;top:644px"></div>
<div class="cb" style="left:754px;top:644px"></div>
<div class="sel" style="top:660px"></div>
<div class="cell c1" style="top:661px"><span class="t" style="letter-spacing:-0.40px;">DIR_SORTTMP</span></div>
<div class="cell c2" style="top:661px"><span class="t" style="letter-spacing:0.00px;"><i class="sl">&#x2044;</i>usr<i class="sl">&#x2044;</i>sap<i class="sl">&#x2044;</i>N77<i class="sl">&#x2044;</i>D00<i class="sl">&#x2044;</i>data</span></div>
<div class="cell c3" style="top:661px"></div>
<div class="cell c4" style="top:661px"></div>
<div class="cell c5" style="top:661px"></div>
<div class="cb" style="left:535px;top:663px"></div>
<div class="cb" style="left:628px;top:663px"></div>
<div class="cb" style="left:754px;top:663px"></div>
<div class="sel" style="top:679px"></div>
<div class="cell c1" style="top:680px"><span class="t" style="letter-spacing:-0.56px;">DIR_SOURCE</span></div>
<div class="cell c2" style="top:680px"><span class="t" style="letter-spacing:0.11px;"><i class="sl">&#x2044;</i>usr<i class="sl">&#x2044;</i>sap<i class="sl">&#x2044;</i>N77<i class="sl">&#x2044;</i>SYS<i class="sl">&#x2044;</i>src</span></div>
<div class="cell c3" style="top:680px"></div>
<div class="cell c4" style="top:680px"></div>
<div class="cell c5" style="top:680px"></div>
<div class="cb" style="left:535px;top:682px"></div>
<div class="cb" style="left:628px;top:682px"></div>
<div class="cb" style="left:754px;top:682px"></div>
<div class="sel" style="top:698px"></div>
<div class="cell c1" style="top:699px"><span class="t" style="letter-spacing:-0.71px;">DIR_TEMP</span></div>
<div class="cell c2" style="top:699px"><span class="t" style="letter-spacing:1.00px;"><i class="sl">&#x2044;</i>tmp</span></div>
<div class="cell c3" style="top:699px"></div>
<div class="cell c4" style="top:699px"></div>
<div class="cell c5" style="top:699px"></div>
<div class="cb" style="left:535px;top:701px"></div>
<div class="cb" style="left:628px;top:701px"></div>
<div class="cb" style="left:754px;top:701px"></div>
<div class="sel" style="top:717px"></div>
<div class="cell c1" style="top:718px"><span class="t" style="letter-spacing:-0.62px;">DIR_TRANS</span></div>
<div class="cell c2" style="top:718px"><span class="t" style="letter-spacing:0.15px;"><i class="sl">&#x2044;</i>usr<i class="sl">&#x2044;</i>sap<i class="sl">&#x2044;</i>trans</span></div>
<div class="cell c3" style="top:718px"></div>
<div class="cell c4" style="top:718px"></div>
<div class="cell c5" style="top:718px"></div>
<div class="cb" style="left:535px;top:720px"><svg width="16" height="16" viewBox="0 0 16 16"><path d="M4.6 7.3 L6.6 12.3 L11 3.8" fill="none" stroke="#1f2447" stroke-width="2" stroke-linejoin="round"/><rect x="5.2" y="11" width="2.6" height="2.4" fill="#1f2447"/></svg></div>
<div class="cb" style="left:628px;top:720px"><svg width="16" height="16" viewBox="0 0 16 16"><path d="M4.6 7.3 L6.6 12.3 L11 3.8" fill="none" stroke="#1f2447" stroke-width="2" stroke-linejoin="round"/><rect x="5.2" y="11" width="2.6" height="2.4" fill="#1f2447"/></svg></div>
<div class="cb" style="left:754px;top:720px"><svg width="16" height="16" viewBox="0 0 16 16"><path d="M4.6 7.3 L6.6 12.3 L11 3.8" fill="none" stroke="#1f2447" stroke-width="2" stroke-linejoin="round"/><rect x="5.2" y="11" width="2.6" height="2.4" fill="#1f2447"/></svg></div>
<div id="leftedge"></div>
</body></html>
